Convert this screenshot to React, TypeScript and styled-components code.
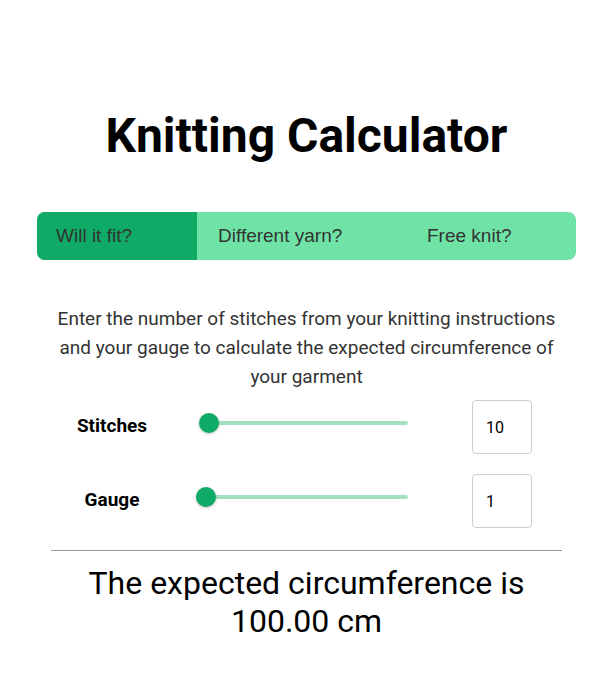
import React, { useState } from "react";
import styled, { createGlobalStyle } from "styled-components";

const GlobalStyle = createGlobalStyle`
  html, body { margin: 0; padding: 0; background: #fff; }
  body { font-family: Roboto, "Liberation Sans", sans-serif; }
  * { box-sizing: border-box; }
`;

const Page = styled.main`
  width: 607px;
  padding: 110px 31px 40px 37px;
  display: flex;
  flex-direction: column;
`;

const Title = styled.h1`
  margin: 0;
  height: 52px;
  font-family: Roboto, sans-serif;
  font-weight: 700;
  font-size: 48px;
  line-height: 52px;
  text-align: center;
  color: #000;
`;

const TabBar = styled.nav`
  margin-top: 50px;
  display: flex;
  height: 48px;
  border-radius: 8px;
  overflow: hidden;
  background: #6fe3a6;
`;

const Tab = styled.button<{ $active?: boolean; $w: number; $pad: number }>`
  width: ${(p) => p.$w}px;
  flex: none;
  border: 0;
  margin: 0;
  padding: 0 0 0 ${(p) => p.$pad}px;
  text-align: left;
  font-family: "Liberation Sans", Arial, sans-serif;
  font-size: 19px;
  color: #333;
  background: ${(p) => (p.$active ? "#0faa66" : "transparent")};
  cursor: pointer;
`;

const Description = styled.p`
  margin: 44px 0 0;
  padding: 0 10px;
  font-size: 19px;
  line-height: 29px;
  color: #333;
  text-align: center;
`;

const Rows = styled.div`
  margin-top: 9px;
  display: flex;
  flex-direction: column;
  gap: 20px;
`;

const Row = styled.div`
  display: flex;
  align-items: center;
  padding-left: 14px;
  height: 54px;
`;

const Label = styled.label`
  width: 122px;
  margin-top: -4px;
  text-align: center;
  font-weight: 700;
  font-size: 19px;
  color: #000;
`;

const Slider = styled.div<{ $start: number }>`
  position: relative;
  margin-left: ${(p) => 23 + p.$start}px;
  width: ${(p) => 212 - p.$start}px;
  height: 20px;
  display: flex;
  align-items: center;
  margin-top: -8px;
`;

const Track = styled.div`
  width: 100%;
  height: 4px;
  border-radius: 2px;
  background: #a2e0c3;
`;

const Thumb = styled.span`
  position: absolute;
  top: 0;
  left: 0;
  width: 20px;
  height: 20px;
  border-radius: 50%;
  background: #0faa66;
  box-shadow: 0 1px 3px rgba(0, 0, 0, 0.25);
`;

const NumberBox = styled.input<{ $start: number }>`
  margin-left: 64px;
  width: 60px;
  height: 54px;
  border: 1px solid #ccc;
  border-radius: 4px;
  padding: 0 0 0 13px;
  font-family: Roboto, sans-serif;
  font-size: 16px;
  color: #000;
  background: #fff;
`;

const Divider = styled.hr`
  margin: 22px 14px 0;
  border: 0;
  border-top: 1px solid #999;
`;

const Result = styled.p`
  margin: 13px 0 0;
  font-size: 32px;
  line-height: 38px;
  text-align: center;
  color: #000;
`;

const tabs = [
  { label: "Will it fit?", w: 160, pad: 19 },
  { label: "Different yarn?", w: 211, pad: 21 },
  { label: "Free knit?", w: 168, pad: 19 },
];

const fields = [
  { label: "Stitches", value: "10", start: 3 },
  { label: "Gauge", value: "1", start: 0 },
];

export default function App() {
  const [active, setActive] = useState(0);
  return (
    <>
      <GlobalStyle />
      <Page>
        <Title>Knitting Calculator</Title>
        <TabBar>
          {tabs.map((t, i) => (
            <Tab key={t.label} $w={t.w} $pad={t.pad} $active={i === active} onClick={() => setActive(i)}>
              {t.label}
            </Tab>
          ))}
        </TabBar>
        <Description>
          Enter the number of stitches from your knitting instructions and your gauge to calculate the
          expected circumference of your garment
        </Description>
        <Rows>
          {fields.map((f) => (
            <Row key={f.label}>
              <Label>{f.label}</Label>
              <Slider $start={f.start}>
                <Track />
                <Thumb />
              </Slider>
              <NumberBox $start={f.start} defaultValue={f.value} />
            </Row>
          ))}
        </Rows>
        <Divider />
        <Result>
          The expected circumference is
          <br />
          100.00 cm
        </Result>
      </Page>
    </>
  );
}
